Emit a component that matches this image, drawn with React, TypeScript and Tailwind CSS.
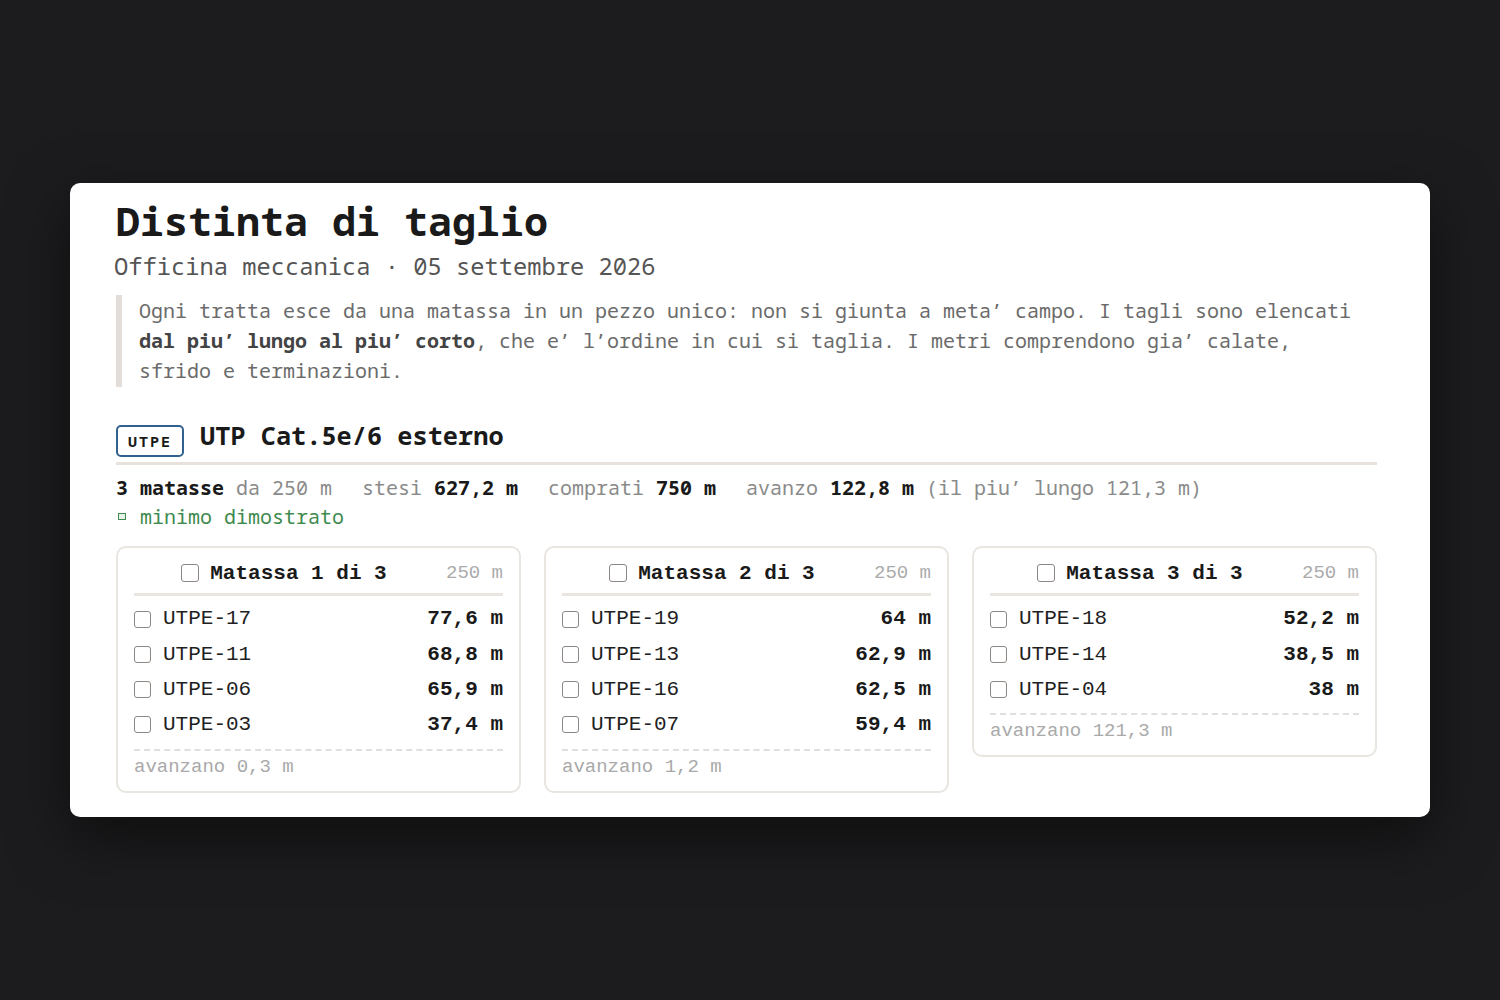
import React from 'react';

// Font stacks: intestazione e testo corrente in Noto/DejaVu, schede in Liberation
const HEAD = "font-['Noto_Sans_Mono','DejaVu_Sans_Mono',monospace]";
const CARD = "font-['Liberation_Mono',monospace]";

type Cut = { id: string; m: string };
type Coil = { n: number; cuts: Cut[]; left: string };

const coils: Coil[] = [
  {
    n: 1,
    cuts: [
      { id: 'UTPE-17', m: '77,6' },
      { id: 'UTPE-11', m: '68,8' },
      { id: 'UTPE-06', m: '65,9' },
      { id: 'UTPE-03', m: '37,4' },
    ],
    left: '0,3',
  },
  {
    n: 2,
    cuts: [
      { id: 'UTPE-19', m: '64' },
      { id: 'UTPE-13', m: '62,9' },
      { id: 'UTPE-16', m: '62,5' },
      { id: 'UTPE-07', m: '59,4' },
    ],
    left: '1,2',
  },
  {
    n: 3,
    cuts: [
      { id: 'UTPE-18', m: '52,2' },
      { id: 'UTPE-14', m: '38,5' },
      { id: 'UTPE-04', m: '38' },
    ],
    left: '121,3',
  },
];

const Box = ({ big }: { big?: boolean }) => (
  <span
    className={`inline-block shrink-0 rounded-[3px] border-[1.5px] border-[#8d8884] bg-white ${
      big ? 'w-[18px] h-[18px]' : 'w-[17px] h-[17px]'
    }`}
  />
);

const CoilCard = ({ coil }: { coil: Coil }) => (
  <div className={`${CARD} self-start rounded-[10px] border-2 border-[#e9e5e1] px-4 pt-[10px] pb-[10px]`}>
    {/* testata matassa */}
    <div className="flex items-center gap-3 h-[30px]">
      <div className="flex-1 flex items-center justify-center gap-[11px]">
        <Box big />
        <span className="text-[21px] font-bold text-[#1a1a1a]">Matassa {coil.n} di 3</span>
      </div>
      <span className="text-[19px] text-[#ababab]">250 m</span>
    </div>
    <div className="mt-[5px] h-[3px] bg-[#ebe5df]" />

    {/* tagli */}
    <div className="mt-[5px]">
      {coil.cuts.map((c) => (
        <div key={c.id} className="flex items-center h-[35.3px]">
          <Box />
          <span className="ml-[12px] text-[21px] text-[#1f1f1f]">{c.id}</span>
          <span className="ml-auto text-[21px] font-bold text-[#1a1a1a]">{c.m} m</span>
        </div>
      ))}
    </div>

    <div className="mt-[6px] border-t-2 border-dashed border-[#e2dedb]" />
    <div className="pt-[2px] text-[19px] leading-[28px] text-[#a9a9a9]">avanzano {coil.left} m</div>
  </div>
);

export default function App() {
  return (
    <div className="min-h-screen bg-[#1c1c1e] flex items-center justify-center">
      <div className="w-[1360px] bg-white rounded-[10px] shadow-[0_20px_60px_rgba(0,0,0,0.5)] pl-[46px] pr-[53px] pt-[14px] pb-[24px]">
        <h1 className={`${HEAD} text-[40px] leading-[48px] font-bold text-[#1a1a1a]`}>Distinta di taglio</h1>
        <p className={`${HEAD} -ml-[2px] mt-[5px] text-[23.75px] leading-[32px] text-[#555555]`}>
          Officina meccanica · 05 settembre 2026
        </p>

        {/* nota */}
        <div className={`${HEAD} mt-[13px] border-l-[6px] border-[#e2ddd8] pl-[17px] pr-[20px] py-[1px] text-[20px] leading-[30px] text-[#6b6b6b]`}>
          Ogni tratta esce da una matassa in un pezzo unico: non si giunta a meta’ campo. I tagli sono elencati{' '}
          <b className="text-[#444444]">dal piu’ lungo al piu’ corto</b>, che e’ l’ordine in cui si taglia. I metri
          comprendono gia’ calate, sfrido e terminazioni.
        </div>

        {/* sezione cavo */}
        <div className={`${HEAD} mt-[30px] flex items-center gap-[16px] pb-[3px] border-b-[3px] border-[#e8e2dc]`}>
          <span className="mt-[6px] h-[32px] px-[10px] flex items-center rounded-[5px] border-2 border-[#33618f] text-[15px] font-bold tracking-[2px] text-[#1a1a1a]">
            UTPE
          </span>
          <span className="mb-[4px] text-[25.3px] font-bold text-[#1a1a1a]">UTP Cat.5e/6 esterno</span>
        </div>

        <div className={`${HEAD} mt-[8px] flex gap-[30px] text-[20px] leading-[29px] text-[#8a8a8a] whitespace-pre`}>
          <span>
            <b className="text-[#1a1a1a]">3 matasse</b> da 250 m
          </span>
          <span>
            stesi <b className="text-[#1a1a1a]">627,2 m</b>
          </span>
          <span>
            comprati <b className="text-[#1a1a1a]">750 m</b>
          </span>
          <span>
            avanzo <b className="text-[#1a1a1a]">122,8 m</b> (il piu’ lungo 121,3 m)
          </span>
        </div>
        <div className={`${HEAD} flex items-center gap-[14px] text-[20px] leading-[29px] text-[#3f8a4f]`}>
          <span className="ml-[2px] w-[8px] h-[7px] border-[1.5px] border-[#3f8a4f] bg-[#e6f2e8]" />
          minimo dimostrato
        </div>

        <div className="mt-[15px] grid grid-cols-3 gap-[23px] items-start">
          {coils.map((c) => (
            <CoilCard key={c.n} coil={c} />
          ))}
        </div>
      </div>
    </div>
  );
}
